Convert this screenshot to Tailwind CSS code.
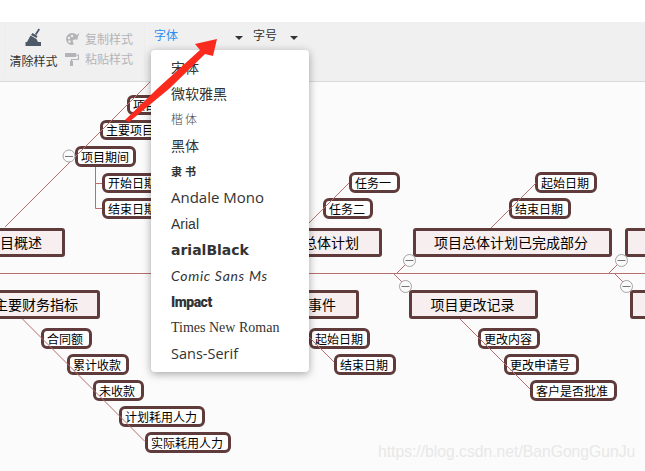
<!DOCTYPE html>
<html lang="zh">
<head>
<meta charset="utf-8">
<script src="https://cdn.jsdelivr.net/npm/@tailwindcss/browser@4"></script>
</head>
<body class="m-0 bg-white">
<div class="relative w-[645px] h-[471px] overflow-hidden bg-white font-['Noto_Sans_CJK_SC','Noto_Sans',sans-serif] text-[#333]">
  <div class="h-[22px] bg-white"></div>
  <!-- toolbar -->
  <div class="h-[60px] bg-[#f0f0f0] border-b border-[#d9d9d9] flex pl-[4px] pt-[2px]">
    <div class="w-[141px] h-[52px] flex border-x border-[#ececec]">
      <div class="w-[57px] flex flex-col items-center pt-[4px]">
        <svg width="20" height="20" viewBox="0 0 20 20" class="block"><path d="M14.5 0.5 L16 1.5 L12.5 7 L11 6 Z M8.5 5 L13.5 8 L12.5 10 L7 7 Z M6.5 7.5 L12.5 11 L14 14 L17 14 L17 18 L1.5 18 L1.5 14 L3 14 Z" fill="#4e5a68"/></svg>
        <span class="text-[12px] leading-[16px] mt-[5px] whitespace-nowrap text-[#333]">清除样式</span>
      </div>
      <div class="flex flex-col pt-[7px] gap-[5px] pl-[3px]">
        <div class="flex items-center h-[15px] gap-[6px] text-[12px] text-[#b4b4b8]">
          <svg width="14" height="14" viewBox="0 0 14 14"><path d="M7 1 A6 6 0 1 0 7 13 C9 13 9 11 8 10 C7 8.500 8 7.500 10 7.500 L12.500 7.500 L13 5 A6.500 6.500 0 0 0 7 1 Z" fill="#b4b4b8"/><circle cx="4" cy="6" r="1.200" fill="#f0f0f0"/><circle cx="7" cy="4" r="1.200" fill="#f0f0f0"/><circle cx="4.500" cy="9.500" r="1.200" fill="#f0f0f0"/><path d="M9 6 L14 1 L14 3 L10.500 7 Z" fill="#b4b4b8"/></svg>
          <span>复制样式</span>
        </div>
        <div class="flex items-center h-[15px] gap-[6px] text-[12px] text-[#b4b4b8]">
          <svg width="14" height="14" viewBox="0 0 14 14"><path d="M0 1 H11 V5 H0 Z" fill="#b4b4b8"/><path d="M11 3 H13.500 V7.500 H6.500 V9" fill="none" stroke="#b4b4b8" stroke-width="1.200"/><path d="M5 9 H8 V14 H5 Z" fill="#b4b4b8"/></svg>
          <span>粘贴样式</span>
        </div>
      </div>
    </div>
    <div class="w-[98px] ml-[5px] h-[52px] relative flex items-start pt-[2px] pl-[4px]">
      <span class="text-[12px] leading-[18px] text-[#2d8cf0]">字体</span>
      <span class="absolute right-[5px] top-[12px] w-0 h-0 border-x-[4px] border-x-transparent border-t-[4px] border-t-[#333]"></span>
    </div>
    <div class="w-[55px] h-[52px] relative flex items-start pt-[2px] pl-[4px] ml-[1px]">
      <span class="text-[12px] leading-[18px] text-[#333]">字号</span>
      <span class="absolute right-[6px] top-[12px] w-0 h-0 border-x-[4px] border-x-transparent border-t-[4px] border-t-[#333]"></span>
    </div>
  </div>

  <!-- canvas -->
  <div class="absolute left-0 top-[82px] w-[645px] h-[389px] bg-[#fbfbfb]"></div>

  <!-- mind map nodes (free canvas) -->
  <div class="absolute left-[127px] top-[95px] w-[70px] h-[20px] text-[12px] leading-[14px] pl-[3px] box-border bg-white border-[3px] border-[#5f3b3b] rounded-[6px] text-black whitespace-nowrap overflow-hidden">项目</div>
  <div class="absolute left-[100px] top-[120px] w-[90px] h-[20px] text-[12px] leading-[14px] pl-[3px] box-border bg-white border-[3px] border-[#5f3b3b] rounded-[6px] text-black whitespace-nowrap overflow-hidden">主要项目</div>
  <div class="absolute left-[75px] top-[146px] w-[61px] h-[21px] text-[12px] leading-[15px] pl-[3px] box-border bg-white border-[3px] border-[#5f3b3b] rounded-[6px] text-black whitespace-nowrap">项目期间</div>
  <div class="absolute left-[102px] top-[173px] w-[90px] h-[20px] text-[12px] leading-[14px] pl-[3px] box-border bg-white border-[3px] border-[#5f3b3b] rounded-[6px] text-black whitespace-nowrap overflow-hidden">开始日期</div>
  <div class="absolute left-[102px] top-[198px] w-[90px] h-[21px] text-[12px] leading-[15px] pl-[3px] box-border bg-white border-[3px] border-[#5f3b3b] rounded-[6px] text-black whitespace-nowrap overflow-hidden">结束日期</div>

  <div class="absolute left-[-20px] top-[228px] w-[85px] h-[29px] flex items-center justify-end pr-[20px] box-border text-[14px] bg-[#f7efef] border-[3px] border-[#5f3b3b] rounded-[3px] text-black whitespace-nowrap overflow-hidden">目概述</div>
  <div class="absolute left-[-20px] top-[290px] w-[120px] h-[29px] flex items-center justify-end pr-[19px] box-border text-[14px] bg-[#f7efef] border-[3px] border-[#5f3b3b] rounded-[3px] text-black whitespace-nowrap overflow-hidden">主要财务指标</div>

  <div class="absolute left-[41px] top-[328px] w-[51px] h-[21px] text-[12px] leading-[15px] pl-[3px] box-border bg-white border-[3px] border-[#5f3b3b] rounded-[6px] text-black whitespace-nowrap">合同额</div>
  <div class="absolute left-[67px] top-[354px] w-[62px] h-[21px] text-[12px] leading-[15px] pl-[3px] box-border bg-white border-[3px] border-[#5f3b3b] rounded-[6px] text-black whitespace-nowrap">累计收款</div>
  <div class="absolute left-[93px] top-[380px] w-[51px] h-[21px] text-[12px] leading-[15px] pl-[3px] box-border bg-white border-[3px] border-[#5f3b3b] rounded-[6px] text-black whitespace-nowrap">未收款</div>
  <div class="absolute left-[119px] top-[406px] w-[86px] h-[21px] text-[12px] leading-[15px] pl-[3px] box-border bg-white border-[3px] border-[#5f3b3b] rounded-[6px] text-black whitespace-nowrap">计划耗用人力</div>
  <div class="absolute left-[145px] top-[432px] w-[86px] h-[21px] text-[12px] leading-[15px] pl-[3px] box-border bg-white border-[3px] border-[#5f3b3b] rounded-[6px] text-black whitespace-nowrap">实际耗用人力</div>

  <div class="absolute left-[349px] top-[172px] w-[51px] h-[21px] text-[12px] leading-[15px] pl-[3px] box-border bg-white border-[3px] border-[#5f3b3b] rounded-[6px] text-black whitespace-nowrap">任务一</div>
  <div class="absolute left-[323px] top-[198px] w-[50px] h-[21px] text-[12px] leading-[15px] pl-[3px] box-border bg-white border-[3px] border-[#5f3b3b] rounded-[6px] text-black whitespace-nowrap">任务二</div>
  <div class="absolute left-[250px] top-[228px] w-[132px] h-[29px] flex items-center justify-end pr-[20px] box-border text-[14px] bg-[#f7efef] border-[3px] border-[#5f3b3b] rounded-[3px] text-black whitespace-nowrap overflow-hidden">总体计划</div>
  <div class="absolute left-[413px] top-[228px] w-[199px] h-[29px] flex items-center justify-center pr-[3px] box-border text-[14px] bg-[#f7efef] border-[3px] border-[#5f3b3b] rounded-[3px] text-black whitespace-nowrap">项目总体计划已完成部分</div>
  <div class="absolute left-[625px] top-[228px] w-[60px] h-[29px] box-border bg-[#f7efef] border-[3px] border-[#5f3b3b] rounded-[3px]"></div>
  <div class="absolute left-[535px] top-[172px] w-[62px] h-[21px] text-[12px] leading-[15px] pl-[3px] box-border bg-white border-[3px] border-[#5f3b3b] rounded-[6px] text-black whitespace-nowrap">起始日期</div>
  <div class="absolute left-[509px] top-[198px] w-[62px] h-[21px] text-[12px] leading-[15px] pl-[3px] box-border bg-white border-[3px] border-[#5f3b3b] rounded-[6px] text-black whitespace-nowrap">结束日期</div>

  <div class="absolute left-[250px] top-[290px] w-[109px] h-[29px] flex items-center justify-end pr-[20px] box-border text-[14px] bg-[#f7efef] border-[3px] border-[#5f3b3b] rounded-[3px] text-black whitespace-nowrap overflow-hidden">事件</div>
  <div class="absolute left-[409px] top-[290px] w-[129px] h-[29px] flex items-center justify-center pr-[2px] box-border text-[14px] bg-[#f7efef] border-[3px] border-[#5f3b3b] rounded-[3px] text-black whitespace-nowrap">项目更改记录</div>
  <div class="absolute left-[630px] top-[290px] w-[60px] h-[29px] box-border bg-[#f7efef] border-[3px] border-[#5f3b3b] rounded-[3px]"></div>
  <div class="absolute left-[309px] top-[328px] w-[61px] h-[21px] text-[12px] leading-[15px] pl-[3px] box-border bg-white border-[3px] border-[#5f3b3b] rounded-[6px] text-black whitespace-nowrap">起始日期</div>
  <div class="absolute left-[334px] top-[354px] w-[62px] h-[21px] text-[12px] leading-[15px] pl-[3px] box-border bg-white border-[3px] border-[#5f3b3b] rounded-[6px] text-black whitespace-nowrap">结束日期</div>
  <div class="absolute left-[478px] top-[328px] w-[62px] h-[21px] text-[12px] leading-[15px] pl-[3px] box-border bg-white border-[3px] border-[#5f3b3b] rounded-[6px] text-black whitespace-nowrap">更改内容</div>
  <div class="absolute left-[504px] top-[354px] w-[75px] h-[21px] text-[12px] leading-[15px] pl-[3px] box-border bg-white border-[3px] border-[#5f3b3b] rounded-[6px] text-black whitespace-nowrap">更改申请号</div>
  <div class="absolute left-[530px] top-[380px] w-[87px] h-[21px] text-[12px] leading-[15px] pl-[3px] box-border bg-white border-[3px] border-[#5f3b3b] rounded-[6px] text-black whitespace-nowrap">客户是否批准</div>

  <!-- connector lines and collapse circles -->
  <svg class="absolute left-0 top-0" width="645" height="471" viewBox="0 0 645 471" fill="none">
    <g stroke="#b86f6d" stroke-width="1">
      <path d="M0 273.500 H645"/>
      <path d="M5 227 L150 82"/>
      <path d="M95.500 167 V208.500 H102 M95.500 183.500 H102"/>
      <path d="M309 223 L349 183"/>
      <path d="M491 228 L536 183"/>
      <path d="M22.500 319 L145 441.500"/>
      <path d="M460 319 L530 389"/>
      <path d="M300 328 L334 362"/>
      <path d="M397 273 L406 264 M393 273 L402 282"/>
      <path d="M609 273 L618 264 M614 273 L623 282"/>
    </g>
    <g fill="#fbfbfb" stroke="#a3a3a3" stroke-width="1">
      <circle cx="69" cy="156" r="6"/>
      <circle cx="409.500" cy="260.500" r="6"/>
      <circle cx="405.500" cy="286.500" r="6"/>
      <circle cx="621.500" cy="260.500" r="6"/>
      <circle cx="626.500" cy="286.500" r="6"/>
    </g>
    <g stroke="#777" stroke-width="1">
      <path d="M65 156.500 H73 M405.500 260.500 H413.500 M401.500 286.500 H409.500 M617.500 260.500 H625.500 M622.500 286.500 H630.500"/>
    </g>
  </svg>

  <!-- font dropdown -->
  <ul class="absolute left-[151px] top-[50px] w-[158px] h-[322px] py-[5px] bg-white rounded-[4px] shadow-[0_2px_8px_rgba(0,0,0,0.35)] text-[14px] text-[#333] list-none m-0">
    <li class="h-[26px] leading-[24px] pl-[20px]">宋体</li>
    <li class="h-[26px] leading-[24px] pl-[20px]">微软雅黑</li>
    <li class="h-[26px] leading-[24px] pl-[20px] font-light text-[12px] tracking-[2px] text-[#444]">楷体</li>
    <li class="h-[26px] leading-[24px] pl-[20px]">黑体</li>
    <li class="h-[26px] leading-[24px] pl-[20px] font-bold text-[11px] tracking-[3px]">隶书</li>
    <li class="h-[26px] leading-[25px] pl-[20px] font-['Open_Sans',sans-serif] text-[15px]">Andale Mono</li>
    <li class="h-[26px] leading-[26px] pl-[20px] font-['Liberation_Sans',sans-serif]">Arial</li>
    <li class="h-[26px] leading-[26px] pl-[20px] font-['DejaVu_Sans',sans-serif] font-bold text-[14px]">arialBlack</li>
    <li class="h-[26px] leading-[26px] pl-[20px] font-['Lato',sans-serif] italic tracking-[0.7px]">Comic Sans Ms</li>
    <li class="h-[26px] leading-[26px] pl-[20px] font-['Roboto',sans-serif] font-black text-[14px] tracking-[-0.5px]">Impact</li>
    <li class="h-[26px] leading-[26px] pl-[20px] font-['Liberation_Serif',serif]">Times New Roman</li>
    <li class="h-[26px] leading-[26px] pl-[20px] font-['Open_Sans',sans-serif] text-[14.5px]">Sans-Serif</li>
  </ul>

  <!-- red annotation arrow -->
  <svg class="absolute left-0 top-0" width="645" height="471" viewBox="0 0 645 471">
    <polygon points="125,120 158,88 200,50 195,44 217,39 213,56 205,54 170,88 129,122" fill="#fb2a1e"/>
  </svg>

  <!-- watermark -->
  <span class="absolute left-[378px] top-[441px] text-[15.7px] leading-[22px] text-[#e8e8e8] font-['Liberation_Sans',sans-serif] whitespace-nowrap">https://blog.csdn.net/BanGongGunJu</span>
</div>
</body>
</html>
